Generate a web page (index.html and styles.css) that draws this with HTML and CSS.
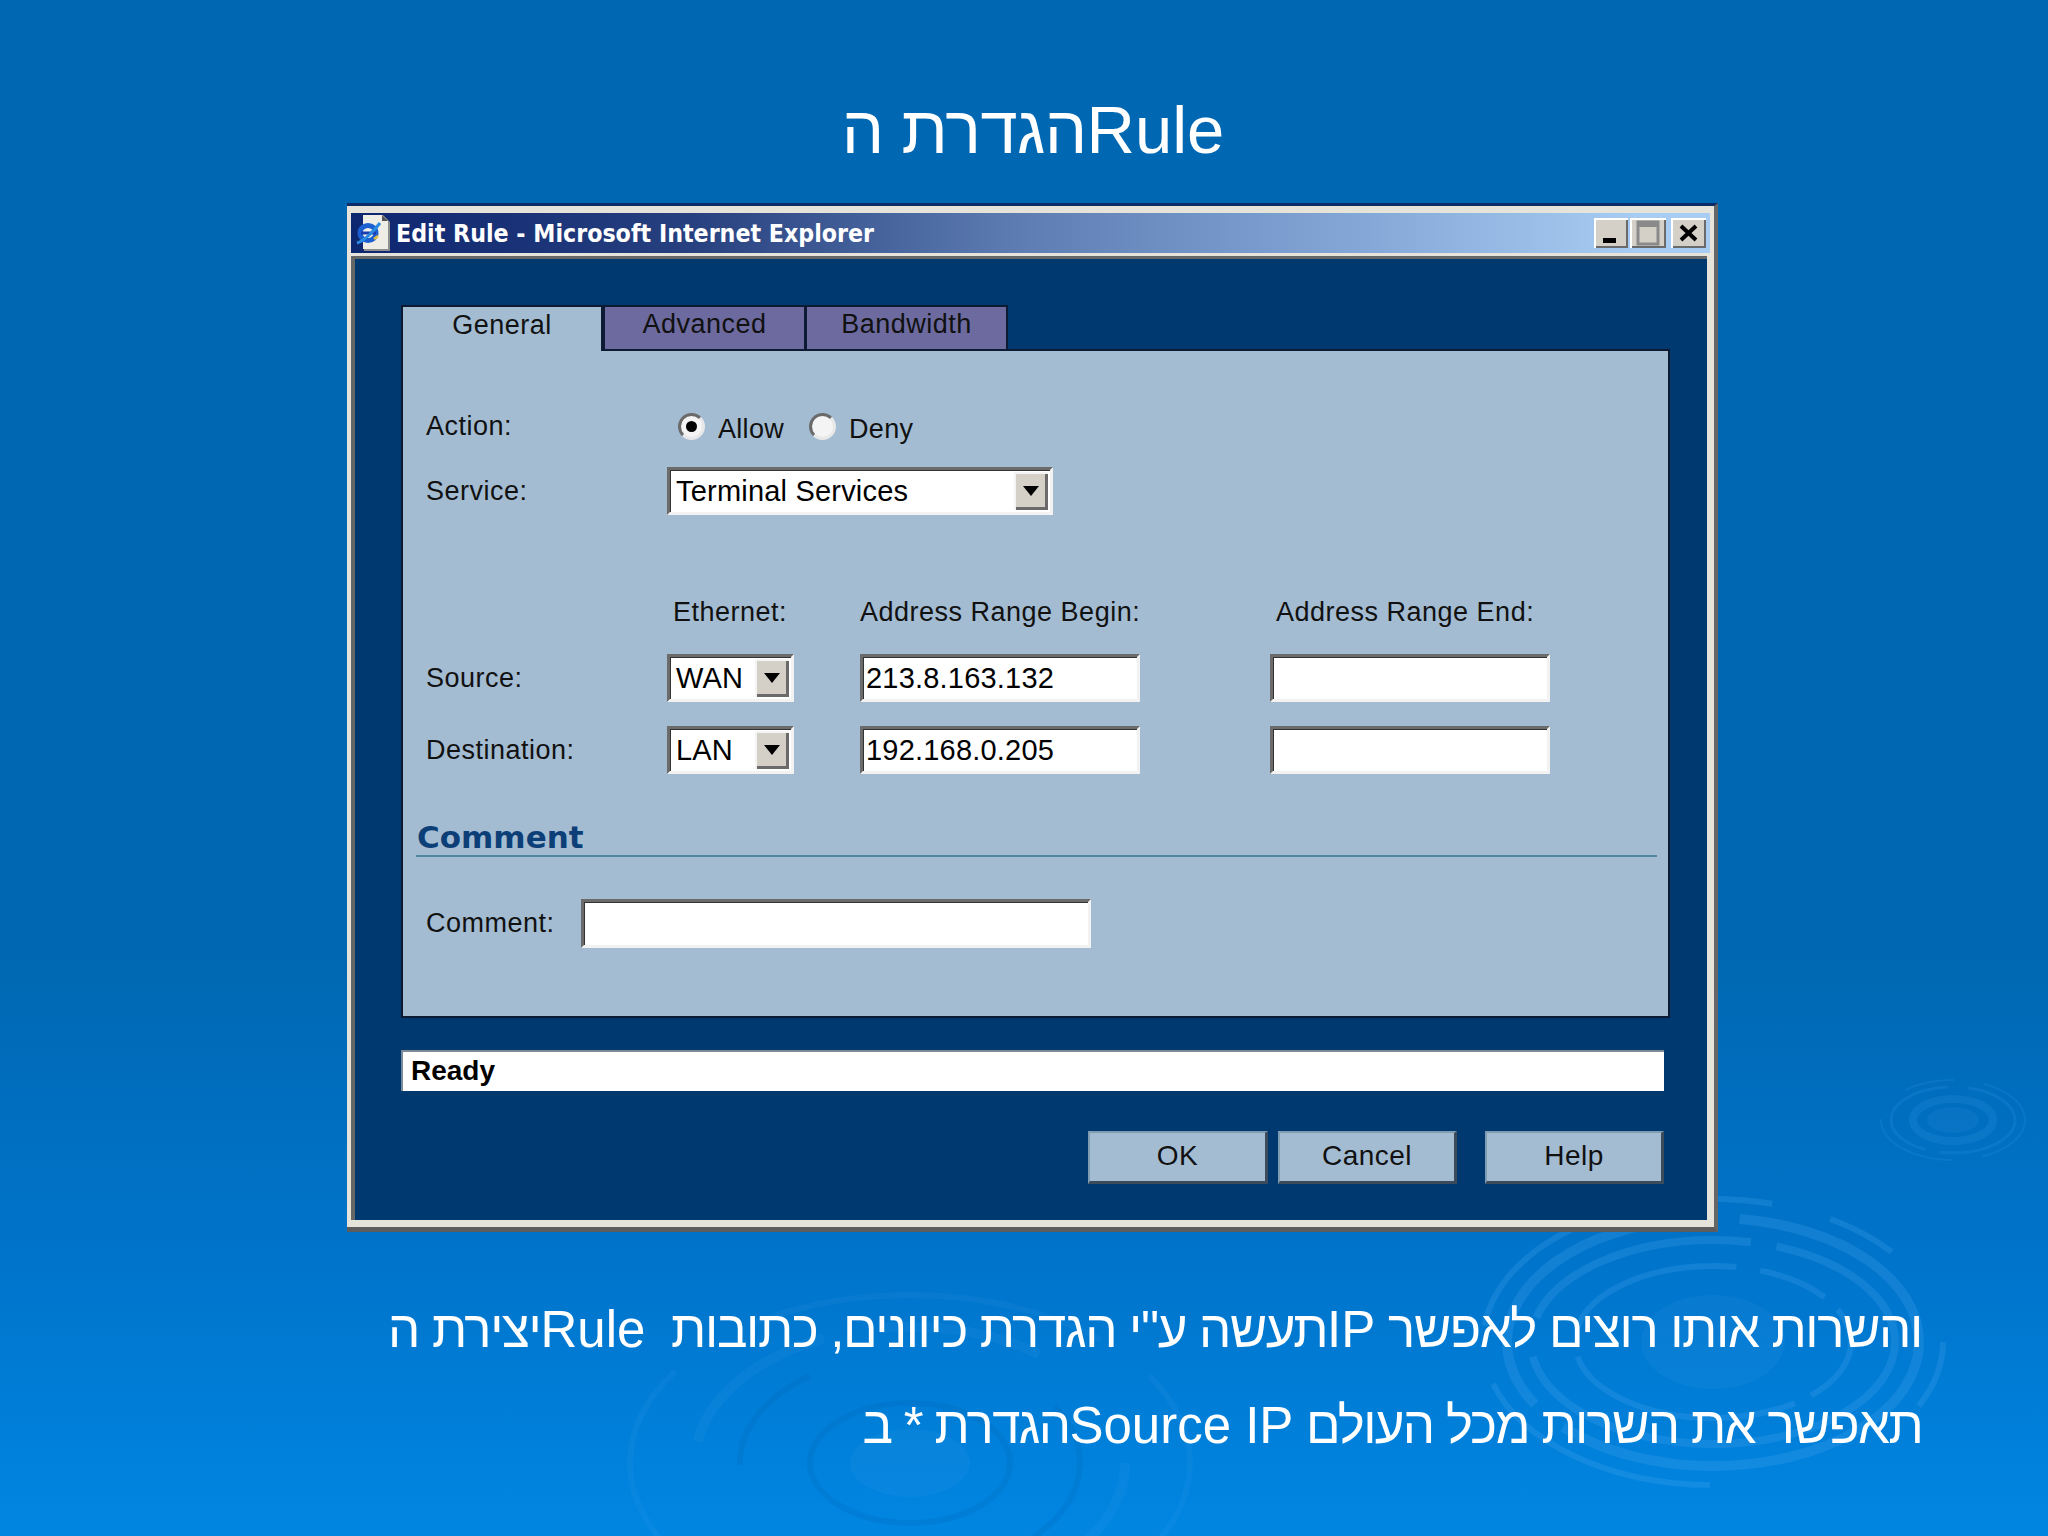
FILE: index.html
```html
<!DOCTYPE html>
<html lang="he">
<head>
<meta charset="utf-8">
<title>הגדרת הRule</title>
<link rel="stylesheet" href="styles.css">
</head>
<body>
<main class="slide">
  <svg class="ripples" viewBox="0 0 2048 1536" width="2048" height="1536" aria-hidden="true">
    <g class="ripple ripple-small" transform="translate(1953 1120)">
      <ellipse class="soft" rx="26" ry="13"/>
      <ellipse class="w8" rx="40" ry="21"/>
      <ellipse class="w3" rx="62" ry="33" stroke-dasharray="90 14 120 20"/>
      <ellipse class="w2" rx="72" ry="40" stroke-dasharray="60 30 90 40 50 30"/>
    </g>
    <g class="ripple ripple-big" transform="translate(1713 1342)">
      <ellipse class="soft" rx="72" ry="47"/>
      <ellipse class="w6" rx="138" ry="76" stroke-dasharray="70 18 240 30 180 24"/>
      <ellipse class="w8" rx="182" ry="102" stroke-dasharray="300 20 120 40 240 26"/>
      <ellipse class="w10" rx="206" ry="124" stroke-dasharray="420 36 300 60"/>
      <ellipse class="w6" rx="230" ry="143" stroke-dasharray="70 230 250 60 340 60"/>
    </g>
    <g class="ripple ripple-low" transform="translate(910 1463)">
      <ellipse class="soft" rx="60" ry="34"/>
      <ellipse class="dark w6" rx="100" ry="60"/>
      <ellipse class="dark w6" rx="170" ry="108" stroke-dasharray="180 260 120 260"/>
      <ellipse class="w10" rx="215" ry="136" stroke-dasharray="160 420 170 60"/>
      <ellipse class="w6" rx="280" ry="168" stroke-dasharray="360 60 400 90"/>
    </g>
  </svg>

  <h1 class="title"><span class="he-title">הגדרת ה</span>Rule</h1>

  <section class="window">
    <header class="titlebar">
      <svg class="ie-icon" viewBox="0 0 36 36" width="36" height="36" aria-hidden="true">
        <path d="M8 0h19l7 7v29H8z" fill="#8f8f8f"/>
        <path d="M7 0h19l6 6v28H7z" fill="#eeeee6"/>
        <path d="M26 0l6 6h-6z" fill="#555"/>
        <ellipse cx="12" cy="18" rx="8" ry="7.5" fill="none" stroke="#1c5fd0" stroke-width="5"/>
        <path d="M5 18h15" stroke="#1c3fb0" stroke-width="3"/>
        <path d="M1 28C8 26 18 16 24 8" fill="none" stroke="#2a8ae0" stroke-width="3"/>
        <path d="M18 24l4-3" stroke="#e8c040" stroke-width="2.5"/>
      </svg>
      <span class="titlebar-text">Edit Rule - Microsoft Internet Explorer</span>
      <div class="win-buttons">
        <span class="win-btn win-min"><svg viewBox="0 0 34 30" width="34" height="30" aria-hidden="true"><rect x="9" y="20" width="13" height="5" fill="#000"/></svg></span>
        <span class="win-btn win-max"><svg viewBox="0 0 36 30" width="36" height="30" aria-hidden="true"><rect x="8" y="4" width="20" height="22" fill="none" stroke="#8a8a8a" stroke-width="3"/><rect x="8" y="4" width="20" height="5" fill="#8a8a8a"/></svg></span>
        <span class="win-btn win-close"><svg viewBox="0 0 35 30" width="35" height="30" aria-hidden="true"><path d="M10 8l15 14M25 8L10 22" stroke="#000" stroke-width="4" fill="none"/></svg></span>
      </div>
    </header>

    <div class="window-body">
      <nav class="tabs">
        <span class="tab tab-active">General</span>
        <span class="tab">Advanced</span>
        <span class="tab">Bandwidth</span>
      </nav>

      <div class="panel">
        <div class="row row-action">
          <span class="label label-action">Action:</span>
          <div class="radios">
            <span class="radio radio-on"></span><span class="radio-text">Allow</span>
            <span class="radio radio-off"></span><span class="radio-text">Deny</span>
          </div>
        </div>
        <div class="row row-service">
          <span class="label">Service:</span>
          <div class="field select select-service">
            <span class="value">Terminal Services</span>
            <span class="drop"><svg viewBox="0 0 16 10" width="16" height="10" aria-hidden="true"><path d="M0 0h16L8 10z" fill="#000"/></svg></span>
          </div>
        </div>
        <div class="row row-heads">
          <span></span>
          <span class="label head-eth">Ethernet:</span>
          <span class="label">Address Range Begin:</span>
          <span class="label head-end">Address Range End:</span>
        </div>
        <div class="row row-addr">
          <span class="label">Source:</span>
          <div class="field select select-eth">
            <span class="value">WAN</span>
            <span class="drop"><svg viewBox="0 0 16 10" width="16" height="10" aria-hidden="true"><path d="M0 0h16L8 10z" fill="#000"/></svg></span>
          </div>
          <div class="field input-addr"><span class="value value-ip">213.8.163.132</span></div>
          <div class="field input-addr"></div>
        </div>
        <div class="row row-addr">
          <span class="label">Destination:</span>
          <div class="field select select-eth">
            <span class="value">LAN</span>
            <span class="drop"><svg viewBox="0 0 16 10" width="16" height="10" aria-hidden="true"><path d="M0 0h16L8 10z" fill="#000"/></svg></span>
          </div>
          <div class="field input-addr"><span class="value value-ip">192.168.0.205</span></div>
          <div class="field input-addr"></div>
        </div>
        <h2 class="section-head">Comment</h2>
        <div class="comment-row">
          <span class="label label-comment">Comment:</span>
          <div class="field input-comment"></div>
        </div>
      </div>

      <div class="status">Ready</div>

      <div class="actions">
        <span class="btn btn-ok">OK</span>
        <span class="btn">Cancel</span>
        <span class="btn btn-help">Help</span>
      </div>
    </div>
  </section>

  <div class="bullets" dir="rtl">
    <p><span class="he">והשרות אותו רוצים לאפשר </span>IP<span class="he">תעשה ע"י הגדרת כיוונים, כתובות&nbsp;&nbsp;</span>Rule<span class="he">יצירת ה</span></p>
    <p><span class="he he-tight">תאפשר את השרות מכל העולם </span>Source IP<span class="he he-tight">הגדרת * ב</span></p>
  </div>
</main>
</body>
</html>
```
FILE: styles.css
```css
* { box-sizing: border-box; }
html, body { margin: 0; padding: 0; }
body { width: 2048px; height: 1536px; overflow: hidden; font-family: "Liberation Sans", Arial, sans-serif; }

.slide {
  position: relative;
  width: 2048px;
  height: 1536px;
  overflow: hidden;
  background: linear-gradient(180deg, #0068b2 0%, #0068b2 62%, #0074cb 82%, #0086e2 100%);
}
.ripples { position: absolute; left: 0; top: 0; }
.ripple ellipse { fill: none; stroke: #4aa8f0; stroke-opacity: .24; }
.ripple .soft { fill: #4aa8f0; fill-opacity: .1; stroke: none; }
.ripple-small ellipse { stroke-opacity: .14; }
.ripple-low ellipse { stroke-opacity: .1; }
.ripple .dark { stroke: #005fa8; stroke-opacity: .16; }
.ripple .w2 { stroke-width: 2; }
.ripple .w3 { stroke-width: 3; }
.ripple .w6 { stroke-width: 6; }
.ripple .w8 { stroke-width: 8; }
.ripple .w10 { stroke-width: 10; }

.title {
  position: relative;
  margin: 0;
  height: 203px;
  padding: 90px 0 0 18px;
  font-size: 67px;
  line-height: 80px;
  font-weight: 400;
  color: #fff;
  text-align: center;
  direction: ltr;
}
.he-title { letter-spacing: -.6px; }

.window {
  position: relative;
  margin-left: 347px;
  width: 1371px;
  height: 1029px;
  padding: 7px 4px 7px 4px;
  background: #e6e4da;
  border-top: 3px solid #0b2c66;
  border-right: 4px solid #666;
  border-bottom: 5px solid #5c5c5c;
  display: flex;
  flex-direction: column;
}

.titlebar {
  display: flex;
  align-items: center;
  height: 40px;
  flex: none;
  background: linear-gradient(90deg, #0d2670 0%, #27407f 25%, #5f7fb4 50%, #86a8d8 75%, #a8ccf2 95%);
  padding-left: 5px;
}
.ie-icon { flex: none; }
.titlebar-text {
  margin-left: 4px;
  font-family: "DejaVu Sans", sans-serif;
  font-stretch: condensed;
  font-size: 24.7px;
  font-weight: 700;
  color: #fff;
  white-space: nowrap;
}
.win-buttons { display: flex; margin-left: auto; padding-right: 4px; }
.win-btn {
  display: block;
  height: 30px;
  background: #d4d0c8;
  box-shadow: inset 2px 2px 0 #fff, inset -2px -2px 0 #6a6a6a;
}
.win-btn svg { display: block; }
.win-min { width: 34px; margin-right: 2px; }
.win-max { width: 36px; margin-right: 5px; }
.win-close { width: 35px; }

.window-body {
  flex: 1;
  margin-top: 3px;
  margin-right: 3px;
  border-top: 3px solid #666;
  border-left: 4px solid #666;
  background: #00396f;
  padding: 46px 0 0 46px;
}

.tabs { display: flex; height: 46px; margin-bottom: -2px; position: relative; z-index: 1; }
.tab {
  display: flex;
  justify-content: center;
  align-items: center;
  width: 202px;
  padding-bottom: 8px;
  background: #6c6a9f;
  border: 2px solid #0c1a33;
  border-left-width: 1px;
  border-right-width: 2px;
  color: #111;
  font-size: 27px;
  letter-spacing: .5px;
}
.tab-active {
  width: 203px;
  background: #a3bcd2;
  border-bottom: 0;
  border-left-width: 2px;
  border-right-width: 3px;
}

.panel {
  width: 1269px;
  height: 669px;
  background: #a3bcd2;
  border: 2px solid #0c1a33;
  padding: 55px 0 0 0;
}

.label { color: #111; font-size: 27px; letter-spacing: .5px; white-space: nowrap; }

.row {
  display: grid;
  grid-template-columns: 264px 193px 410px 280px;
  align-items: center;
}
.row > .label:first-child { padding-left: 23px; }
.row-action { height: 45px; }
.label-action { margin-top: -5px; }
.row-service { height: 48px; margin-top: 16px; }
.row-heads { height: 36px; margin-top: 79px; }
.row-addr { height: 48px; margin-top: 24px; }
.head-eth { padding-left: 6px; }
.head-end { padding-left: 6px; }

.radios { display: flex; align-items: center; grid-column: 2 / 5; padding-left: 11px; }
.radio {
  flex: none;
  display: block;
  width: 27px;
  height: 27px;
  margin-top: -5px;
  border-radius: 50%;
  background: #f4f4f4;
  border: 3px solid;
  border-color: #6a6a6a #e8e8e8 #e8e8e8 #6a6a6a;
  position: relative;
}
.radio-on::after {
  content: "";
  position: absolute;
  left: 5px;
  top: 5px;
  width: 11px;
  height: 11px;
  border-radius: 50%;
  background: #000;
}
.radio-text { color: #111; font-size: 27px; letter-spacing: .3px; margin: 2px 14px 0 13px; }
.radio-text:last-child { margin-right: 0; }
.radio-on + .radio-text { margin-right: 25px; }

.field {
  display: flex;
  align-items: center;
  height: 100%;
  background: #fff;
  border: 3px solid;
  border-color: #6b6b6b #f2f2f2 #f2f2f2 #6b6b6b;
  box-shadow: inset 1px 1px 0 #333;
}
.value { color: #000; font-size: 29px; letter-spacing: .2px; white-space: nowrap; padding-left: 6px; }
.value-ip { padding-left: 3px; }
.select { justify-content: space-between; padding-right: 2px; }
.select-service { width: 386px; grid-column: 2 / 5; }
.select-eth { width: 127px; }
.drop {
  display: flex;
  align-items: center;
  justify-content: center;
  flex: none;
  width: 34px;
  height: 38px;
  background: #d4d0c8;
  box-shadow: inset 2px 2px 0 #f4f4f4, inset -3px -3px 0 #6a6a6a;
}
.drop svg { display: block; }
.input-addr { width: 280px; }

.section-head {
  margin: 42px 11px 0 13px;
  height: 41px;
  padding-left: 1px;
  border-bottom: 2px solid #4f8a9e;
  font-family: "DejaVu Sans", sans-serif;
  font-size: 31px;
  line-height: 42px;
  font-weight: 700;
  color: #0c3f78;
}
.comment-row { display: flex; align-items: center; margin-top: 42px; height: 49px; }
.label-comment { width: 178px; padding-left: 23px; }
.input-comment { width: 510px; }

.status {
  width: 1263px;
  height: 41px;
  margin-top: 32px;
  padding-left: 8px;
  background: #fff;
  border-top: 2px solid #7d8a99;
  border-left: 2px solid #7d8a99;
  color: #000;
  font-size: 28px;
  line-height: 38px;
  font-weight: 700;
}

.actions { display: flex; width: 1263px; margin-top: 40px; justify-content: flex-end; }
.btn {
  display: flex;
  align-items: center;
  justify-content: center;
  width: 179px;
  height: 53px;
  margin-left: 10px;
  padding-bottom: 2px;
  background: #a3bcd2;
  border: 2px solid;
  border-color: #7f9cb3 #3c4b5c #3c4b5c #7f9cb3;
  border-bottom-width: 3px;
  border-right-width: 3px;
  color: #111;
  font-size: 28px;
  letter-spacing: .5px;
}
.btn-ok { width: 180px; }
.btn-help { margin-left: 28px; }

.bullets {
  position: relative;
  margin-top: 50px;
  padding-right: 126px;
  color: #fff;
  font-size: 51px;
  line-height: 96px;
}
.bullets p { margin: 0; white-space: nowrap; }
.he { letter-spacing: -1.33px; }
.he-tight { letter-spacing: -1.65px; }
```
